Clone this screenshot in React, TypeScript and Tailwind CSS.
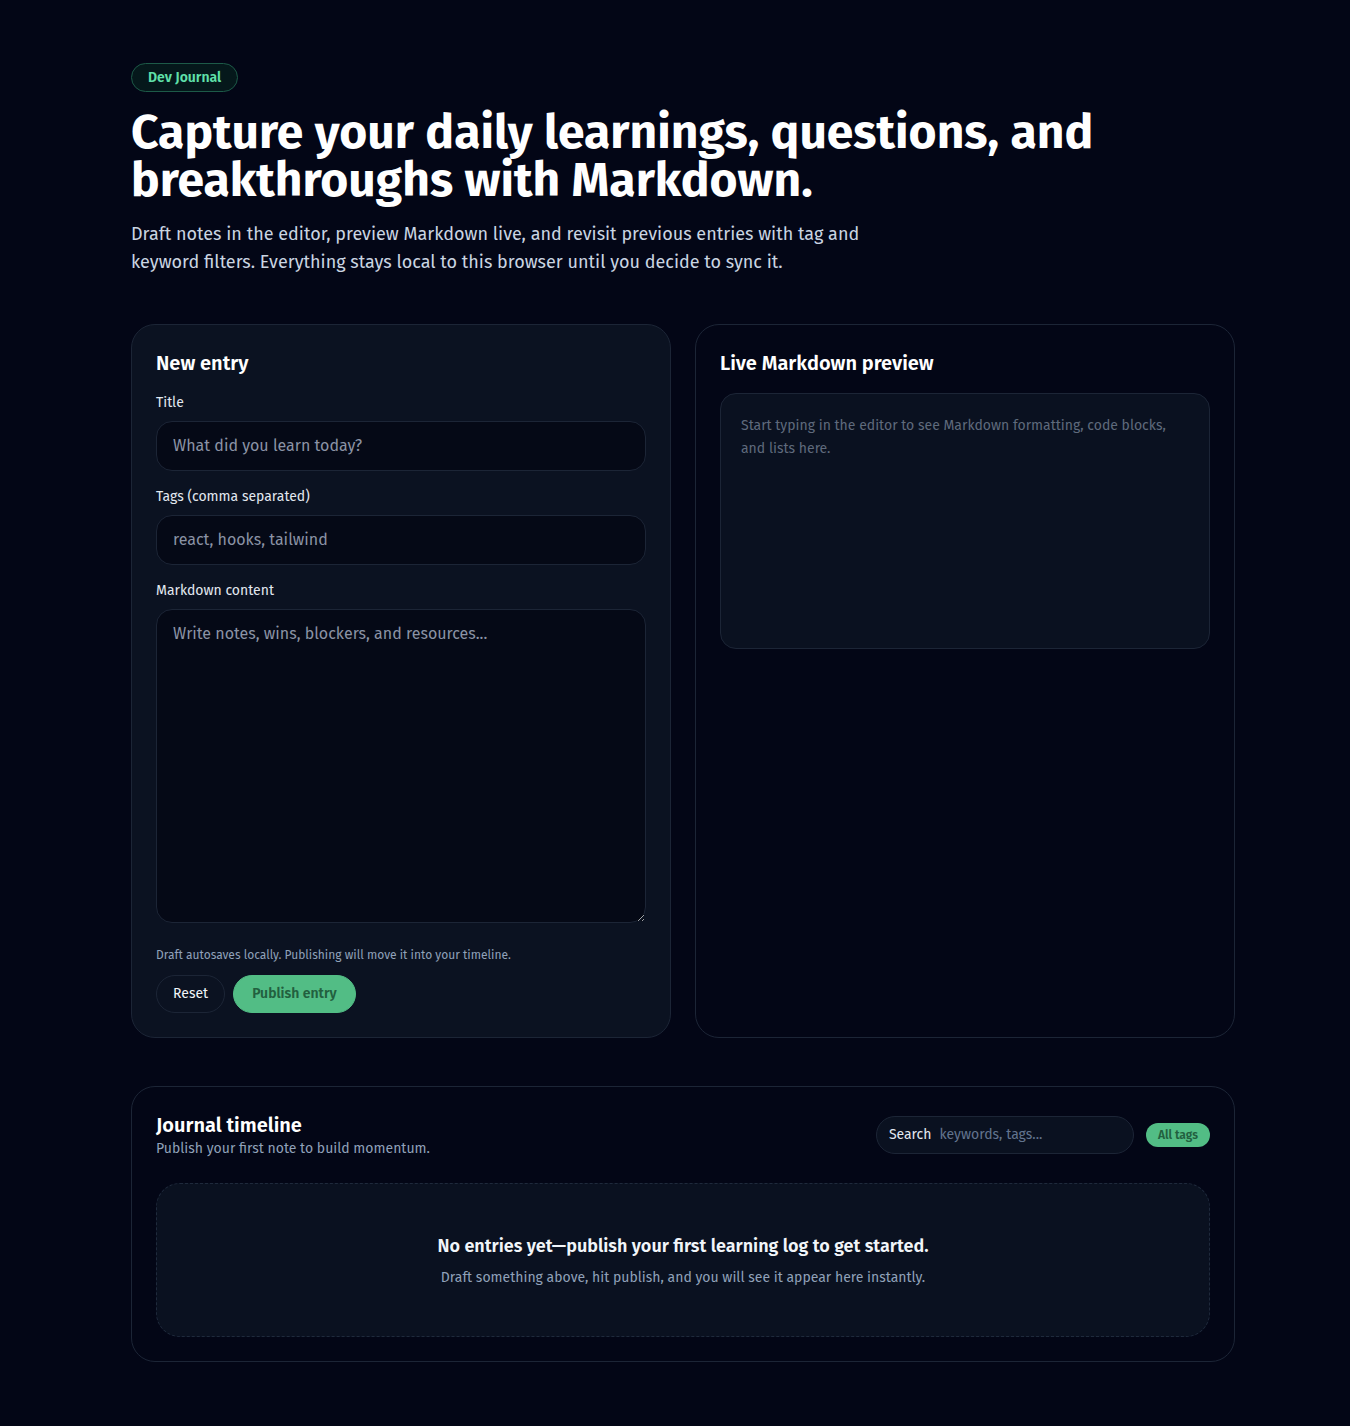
import React, { useState } from 'react';

const inputClass =
  'mt-2 block w-full rounded-2xl border border-[#1c2536] bg-[#050916] px-4 py-3 text-base text-slate-100 placeholder:text-[#8b93a5] focus:outline-none';

const App: React.FC = () => {
  const [title, setTitle] = useState('');
  const [tags, setTags] = useState('');
  const [content, setContent] = useState('');
  const [query, setQuery] = useState('');

  const handleReset = () => {
    setTitle('');
    setTags('');
    setContent('');
  };

  return (
    <div className="min-h-screen bg-[#030616] font-['Fira_Sans',sans-serif] text-slate-100">
      <div className="ml-[131px] w-[1104px] pt-[63px] pb-16">
        {/* Hero */}
        <span className="inline-flex h-[29px] items-center rounded-full border border-[#1d5a48] bg-[#06241f]/60 px-4 text-sm font-semibold text-[#5fe0aa]">
          Dev Journal
        </span>
        <h1 className="mt-4 text-5xl leading-none font-bold text-white">
          Capture your daily learnings, questions, and breakthroughs with Markdown.
        </h1>
        <p className="mt-4 max-w-3xl text-lg leading-7 text-slate-300">
          Draft notes in the editor, preview Markdown live, and revisit previous entries with tag and keyword filters.
          Everything stays local to this browser until you decide to sync it.
        </p>

        <div className="mt-12 grid grid-cols-2 gap-6">
          {/* Editor */}
          <div className="rounded-3xl border border-[#1c2536] bg-[#0b1221] p-6">
            <h2 className="text-xl leading-7 font-semibold text-white">New entry</h2>
            <div className="mt-4 space-y-4">
              <label className="block text-sm text-slate-200">
                Title
                <input
                  type="text"
                  value={title}
                  onChange={(e) => setTitle(e.target.value)}
                  placeholder="What did you learn today?"
                  className={inputClass}
                />
              </label>
              <label className="block text-sm text-slate-200">
                Tags (comma separated)
                <input
                  type="text"
                  value={tags}
                  onChange={(e) => setTags(e.target.value)}
                  placeholder="react, hooks, tailwind"
                  className={inputClass}
                />
              </label>
              <label className="block text-sm text-slate-200">
                Markdown content
                <textarea
                  rows={12}
                  value={content}
                  onChange={(e) => setContent(e.target.value)}
                  placeholder="Write notes, wins, blockers, and resources..."
                  className={inputClass}
                />
              </label>
            </div>
            <p className="mt-6 text-xs text-slate-400">
              Draft autosaves locally. Publishing will move it into your timeline.
            </p>
            <div className="mt-3 flex items-center gap-2">
              <button
                onClick={handleReset}
                className="rounded-full border border-[#1c2536] px-4 py-2 text-sm text-slate-100"
              >
                Reset
              </button>
              <button className="rounded-full border border-[#52bd85] bg-[#52bd85] px-[18px] py-2 text-sm font-semibold text-[#22603f]">
                Publish entry
              </button>
            </div>
          </div>

          {/* Preview */}
          <div className="rounded-3xl border border-[#1c2536] p-6">
            <h2 className="text-xl leading-7 font-semibold text-white">Live Markdown preview</h2>
            <div className="mt-4 min-h-64 rounded-2xl border border-[#1c2536] bg-[#0a1120] p-5 text-sm leading-[23px] text-[#5f6a7c]">
              Start typing in the editor to see Markdown formatting, code blocks, and lists here.
            </div>
          </div>
        </div>

        {/* Timeline */}
        <div className="mt-12 rounded-3xl border border-[#1c2536] p-6">
          <div className="flex items-center justify-between">
            <div>
              <h2 className="text-xl leading-7 font-semibold text-white">Journal timeline</h2>
              <p className="text-sm leading-5 text-slate-400">Publish your first note to build momentum.</p>
            </div>
            <div className="flex items-center gap-3">
              <label className="flex w-[258px] items-center gap-2 rounded-full border border-[#1c2536] bg-[#0a1120] px-3 py-2 text-sm">
                <span className="text-slate-200">Search</span>
                <input
                  type="text"
                  value={query}
                  onChange={(e) => setQuery(e.target.value)}
                  placeholder="keywords, tags..."
                  className="min-w-0 flex-1 bg-transparent text-slate-100 placeholder:text-slate-500 focus:outline-none"
                />
              </label>
              <button className="rounded-full bg-[#52bd85] px-3 py-1 text-xs font-semibold text-[#22603f]">
                All tags
              </button>
            </div>
          </div>

          <div className="mt-6 rounded-3xl border border-dashed border-[#1f2a3c] bg-[#0a1120] py-12 text-center">
            <p className="text-lg leading-7 font-semibold text-slate-100">
              No entries yet—publish your first learning log to get started.
            </p>
            <p className="mt-2 text-sm leading-5 text-slate-400">
              Draft something above, hit publish, and you will see it appear here instantly.
            </p>
          </div>
        </div>
      </div>
    </div>
  );
};

export default App;
